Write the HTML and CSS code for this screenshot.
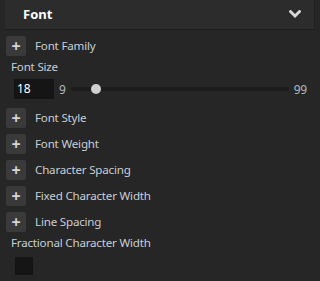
FILE: index.html
```html
<!DOCTYPE html>
<html>
<head>
<meta charset="utf-8">
<link rel="stylesheet" href="styles.css">
</head>
<body>
<div class="panel">
  <div class="header">
    <span class="title">Font</span>
    <svg class="chevron" width="12" height="8" viewBox="0 0 12 8"><path d="M1.5 1.5 L6 6 L10.5 1.5" fill="none" stroke="#d8d8d8" stroke-width="2.8" stroke-linecap="square"/></svg>
  </div>
  <div class="rows">
    <div class="row"><span class="plus">+</span><span class="lbl">Font Family</span></div>
    <div class="field">
      <div class="flabel">Font Size</div>
      <div class="slider-row">
        <div class="num">18</div>
        <span class="min">9</span>
        <div class="track"><div class="knob"></div></div>
        <span class="max">99</span>
      </div>
    </div>
    <div class="row"><span class="plus">+</span><span class="lbl">Font Style</span></div>
    <div class="row"><span class="plus">+</span><span class="lbl">Font Weight</span></div>
    <div class="row"><span class="plus">+</span><span class="lbl">Character Spacing</span></div>
    <div class="row"><span class="plus">+</span><span class="lbl">Fixed Character Width</span></div>
    <div class="row"><span class="plus">+</span><span class="lbl">Line Spacing</span></div>
    <div class="field">
      <div class="flabel">Fractional Character Width</div>
      <div class="check"></div>
    </div>
  </div>
</div>
</body>
</html>
```
FILE: styles.css
```css
html, body {
  margin: 0;
  padding: 0;
  background: #262626;
  width: 320px;
  height: 281px;
  overflow: hidden;
  font-family: "Noto Sans", "Open Sans", sans-serif;
  font-size: 11.6px;
  letter-spacing: -0.2px;
  color: #c7ced6;
}
.header {
  margin: 0 5px;
  height: 30px;
  box-sizing: border-box;
  background: #2c2c2c;
  border-bottom: 1px solid #1d1d1d;
  border-right: 1px solid #1f1f1f;
  display: flex;
  align-items: center;
  justify-content: space-between;
  padding: 0 13px 1px 18px;
}
.title {
  font-weight: bold;
  font-size: 13px;
  letter-spacing: 0;
  color: #ffffff;
}
.chevron {
  display: block;
  margin-top: -1px;
}
.rows {
  display: flex;
  flex-direction: column;
  padding: 6px 0 0 6px;
}
.row {
  display: flex;
  align-items: center;
  height: 20px;
  margin-bottom: 6px;
}
.plus {
  width: 20px;
  height: 20px;
  background: #3a3a3a;
  border-radius: 2px;
  color: #d6d6d6;
  font-weight: bold;
  font-size: 16px;
  letter-spacing: 0;
  line-height: 20px;
  text-align: center;
  margin-right: 9px;
}
.lbl {
  line-height: 20px;
}
.field {
  display: flex;
  flex-direction: column;
  padding-left: 5px;
}
.flabel {
  line-height: 16px;
  margin-top: -3px;
}
.slider-row {
  display: flex;
  align-items: center;
  margin-top: 4px;
  margin-bottom: 9px;
  height: 20px;
}
.num {
  width: 40px;
  height: 20px;
  margin-left: 3px;
  background: #151515;
  color: #ffffff;
  font-size: 12px;
  line-height: 20px;
  padding-left: 3px;
  box-sizing: border-box;
}
.min {
  margin-left: 5px;
  color: #b0b8c0;
  font-size: 12px;
}
.track {
  position: relative;
  width: 218px;
  height: 4px;
  margin-left: 5px;
  background: #1c1c1c;
  border-radius: 2px;
}
.knob {
  position: absolute;
  left: 20px;
  top: -3px;
  width: 10px;
  height: 10px;
  border-radius: 50%;
  background: #cfcfcf;
}
.max {
  margin-left: 5px;
  color: #b0b8c0;
  font-size: 12px;
}
.check {
  width: 18px;
  height: 18px;
  margin: 6px 0 0 4px;
  background: #151515;
}
```
